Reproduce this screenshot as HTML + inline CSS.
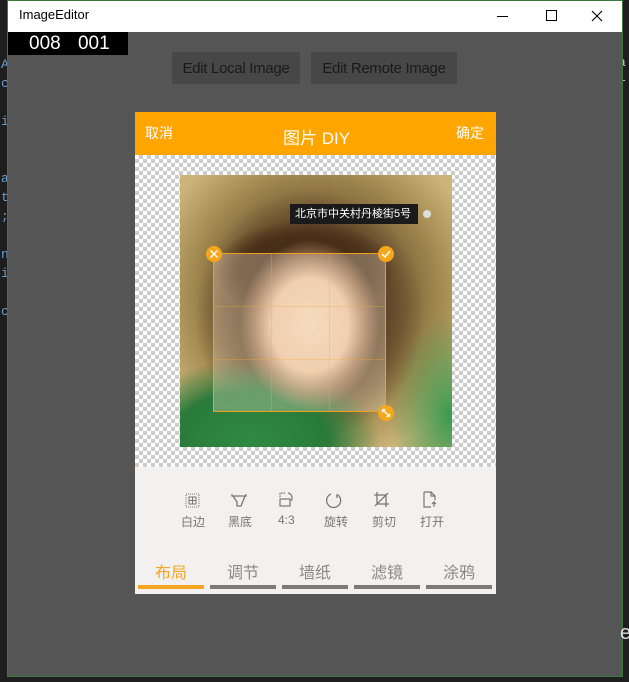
<!DOCTYPE html>
<html><head><meta charset="utf-8"><style>
*{margin:0;padding:0;box-sizing:border-box}
body{width:629px;height:682px;overflow:hidden;background:#1e1e1e;position:relative;font-family:"Liberation Sans","Noto Sans CJK SC",sans-serif}
.abs{position:absolute}
.code{color:#6a9fd0;font-family:"Liberation Mono",monospace;font-size:13px}
</style></head><body>
<div class="abs code" style="left:1px;top:55px;line-height:19px">A<br>c<br><br>i<br><br><br>a<br>t<br>;<br><br>n<br>i<br><br>c</div>
<div class="abs code" style="left:618px;top:55px;color:#ccc">a<br>i</div>
<!-- window -->
<div class="abs" style="left:7px;top:0;width:616px;height:677px;border:1px solid #3c7a3c;background:#555"></div>
<div class="abs" style="left:8px;top:1px;width:614px;height:31px;background:#fff"></div>
<div class="abs" style="left:19px;top:7px;font-size:13px;color:#000">ImageEditor</div>
<div class="abs" style="left:497px;top:16px;width:11px;height:1px;background:#000"></div>
<div class="abs" style="left:546px;top:10px;width:11px;height:11px;border:1px solid #000"></div>
<svg class="abs" style="left:591px;top:10px" width="12" height="12" viewBox="0 0 12 12" stroke="#000" stroke-width="1.1"><path d="M1 1l10 10M11 1L1 11"/></svg>
<div class="abs" style="left:8px;top:32px;width:120px;height:23px;background:#000;color:#fff;font-size:19px;line-height:23px;padding-left:21px;word-spacing:12px">008 001</div>
<div class="abs" style="left:172px;top:52px;width:128px;height:32px;background:#474747;color:#1a1a1a;font-size:15px;line-height:33px;text-align:center;letter-spacing:-0.3px">Edit Local Image</div>
<div class="abs" style="left:311px;top:52px;width:146px;height:32px;background:#474747;color:#1a1a1a;font-size:15px;line-height:33px;text-align:center;letter-spacing:-0.3px">Edit Remote Image</div>
<!-- dialog -->
<div class="abs" style="left:135px;top:112px;width:361px;height:43px;background:#ffa500;color:#fff">
<span class="abs" style="left:10px;top:11px;font-size:14px">取消</span>
<span class="abs" style="left:148px;top:12px;font-size:17px">图片 DIY</span>
<span class="abs" style="left:321px;top:11px;font-size:14px">确定</span></div>
<div class="abs" style="left:135px;top:155px;width:361px;height:312px;background-color:#fff;background-image:linear-gradient(45deg,#ccc 25%,transparent 25%,transparent 75%,#ccc 75%),linear-gradient(45deg,#ccc 25%,transparent 25%,transparent 75%,#ccc 75%);background-size:8px 8px;background-position:0 0,4px 4px"></div>
<div class="abs" style="left:180px;top:175px;width:272px;height:272px;background:
radial-gradient(ellipse 70px 85px at 130px 150px,#f3d3b2 0%,#e9c29c 55%,rgba(200,150,110,.6) 80%,transparent 100%),
radial-gradient(ellipse 90px 50px at 125px 95px,#3a2414 0%,#4a3018 70%,transparent 100%),
radial-gradient(ellipse 130px 80px at 70px 265px,#2f8a42 0%,#2a7a3a 60%,transparent 100%),
radial-gradient(ellipse 60px 100px at 270px 240px,#3a9a50 0%,transparent 100%),
radial-gradient(ellipse 115px 125px at 130px 140px,#4a3420 0%,#5a4024 55%,transparent 100%),
radial-gradient(ellipse 170px 170px at 136px 120px,#6e5430 40%,#a48c52 75%,#cdb57a 100%)"></div>
<div class="abs" style="left:213px;top:253px;width:173px;height:159px;border:1px solid #f0a020;background:rgba(255,240,220,.3)">
<div class="abs" style="left:57px;top:0;width:1px;height:100%;background:rgba(240,170,60,.35)"></div>
<div class="abs" style="left:115px;top:0;width:1px;height:100%;background:rgba(240,170,60,.35)"></div>
<div class="abs" style="top:52px;left:0;height:1px;width:100%;background:rgba(240,170,60,.35)"></div>
<div class="abs" style="top:105px;left:0;height:1px;width:100%;background:rgba(240,170,60,.35)"></div></div>
<svg class="abs" style="left:205px;top:245px" width="18" height="18" viewBox="0 0 18 18"><circle cx="9" cy="9" r="8" fill="#f6a71c"/><path d="M5.5 5.5l7 7M12.5 5.5l-7 7" stroke="#fff" stroke-width="1.4"/></svg>
<svg class="abs" style="left:377px;top:245px" width="18" height="18" viewBox="0 0 18 18"><circle cx="9" cy="9" r="8" fill="#f6a71c"/><path d="M5 9l3 3 5-6" stroke="#fff" stroke-width="1.4" fill="none"/></svg>
<svg class="abs" style="left:377px;top:404px" width="18" height="18" viewBox="0 0 18 18"><circle cx="9" cy="9" r="8" fill="#f6a71c"/><path d="M5.5 5.5l7 7M5.5 5.5h3M5.5 5.5v3M12.5 12.5h-3M12.5 12.5v-3" stroke="#fff" stroke-width="1.3" fill="none"/></svg>
<div class="abs" style="left:290px;top:204px;width:128px;height:20px;background:#1a1a1a;color:#fff;font-size:11px;line-height:20px;padding-left:5px">北京市中关村丹棱街5号</div>
<div class="abs" style="left:423px;top:210px;width:8px;height:8px;border-radius:50%;background:#ddd"></div>
<!-- toolbar -->
<div class="abs" style="left:135px;top:467px;width:361px;height:127px;background:#f2f1ef"></div>
<div class="abs" style="left:170px;top:490px;width:290px;font-size:12px;color:#777">
<svg class="abs" style="left:15px;top:3px" width="15" height="15" viewBox="0 0 15 15" fill="none" stroke="#777"><rect x="1" y="1" width="13" height="13" stroke-dasharray="1 1"/><rect x="4" y="4" width="7" height="7"/><path d="M7.5 4v7M4 7.5h7"/></svg>
<svg class="abs" style="left:60px;top:2px" width="18" height="16" viewBox="0 0 18 16" fill="none" stroke="#777" stroke-width="1.3"><path d="M2 2v2h14V2M3 4l4 6v4h4l4-10"/></svg>
<svg class="abs" style="left:108px;top:1px" width="16" height="17" viewBox="0 0 16 17" fill="none" stroke="#777" stroke-width="1.2"><rect x="2" y="8" width="10" height="7"/><path d="M2 6V2h5" stroke-dasharray="1.5 1"/><path d="M10 2a5 5 0 0 1 3 8"/></svg>
<svg class="abs" style="left:155px;top:1px" width="18" height="18" viewBox="0 0 18 18" fill="none" stroke="#777" stroke-width="1.3"><path d="M6 3a7 7 0 1 0 7 1"/><path d="M12 3v4"/></svg>
<svg class="abs" style="left:203px;top:1px" width="17" height="17" viewBox="0 0 17 17" fill="none" stroke="#777" stroke-width="1.3"><path d="M4 1v12h12M1 4h12v12M2 15L15 2"/></svg>
<svg class="abs" style="left:252px;top:1px" width="15" height="17" viewBox="0 0 15 17" fill="none" stroke="#777" stroke-width="1.2"><path d="M2 1h7l4 4v4M2 1v15h7M9 1v4h4M12 16v-5l-2 2M12 11l2 2"/></svg>
<span class="abs" style="left:11px;top:23px">白边</span>
<span class="abs" style="left:58px;top:23px">黑底</span>
<span class="abs" style="left:108px;top:23px">4:3</span>
<span class="abs" style="left:154px;top:23px">旋转</span>
<span class="abs" style="left:202px;top:23px">剪切</span>
<span class="abs" style="left:250px;top:23px">打开</span></div>
<div class="abs" style="left:135px;top:559px;width:361px;font-size:16px;color:#888">
<span class="abs" style="left:20px;top:0;color:#f5a520">布局</span>
<span class="abs" style="left:92px;top:0">调节</span>
<span class="abs" style="left:164px;top:0">墙纸</span>
<span class="abs" style="left:236px;top:0">滤镜</span>
<span class="abs" style="left:308px;top:0">涂鸦</span></div>
<div class="abs" style="left:138px;top:585px;width:66px;height:4px;background:#f5a520"></div>
<div class="abs" style="left:210px;top:585px;width:66px;height:4px;background:#7a7a7a"></div>
<div class="abs" style="left:282px;top:585px;width:66px;height:4px;background:#7a7a7a"></div>
<div class="abs" style="left:354px;top:585px;width:66px;height:4px;background:#7a7a7a"></div>
<div class="abs" style="left:426px;top:585px;width:66px;height:4px;background:#7a7a7a"></div>
<div class="abs" style="left:620px;top:622px;color:#ddd;font-size:20px">e</div>
</body></html>
